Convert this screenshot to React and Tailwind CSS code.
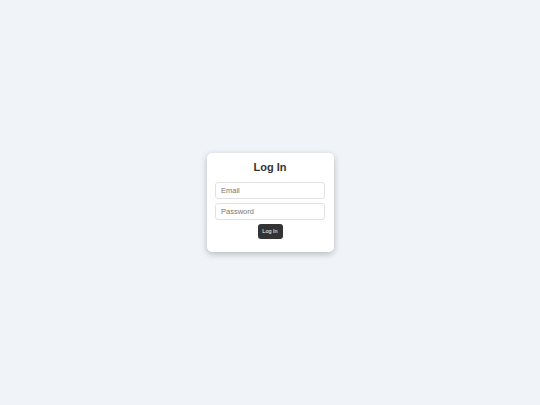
export default function App() {
  return (
    <div className="min-h-screen w-full bg-[#f0f4f8] flex items-center justify-center font-['Liberation_Sans',Arial,sans-serif]">
      <div className="w-[127px] bg-white rounded-[5px] shadow-[0_2px_6px_rgba(0,0,0,0.25)] px-[8px] pt-[8px] pb-[13px] flex flex-col items-center">
        <h2 className="text-[11px] leading-[13px] font-bold text-[#333] mb-[8px]">Log In</h2>
        <input
          type="email"
          placeholder="Email"
          className="w-[110px] h-[17px] px-[5px] text-[7.5px] border border-[#e2e2e2] rounded-[3px] placeholder:text-[#777] outline-none mb-[4px]"
        />
        <input
          type="password"
          placeholder="Password"
          className="w-[110px] h-[17px] px-[5px] text-[7.5px] border border-[#e2e2e2] rounded-[3px] placeholder:text-[#777] outline-none mb-[4px]"
        />
        <button className="w-[25px] h-[15px] bg-[#333] text-white text-[5.5px] rounded-[3px]">Log In</button>
      </div>
    </div>
  )
}
